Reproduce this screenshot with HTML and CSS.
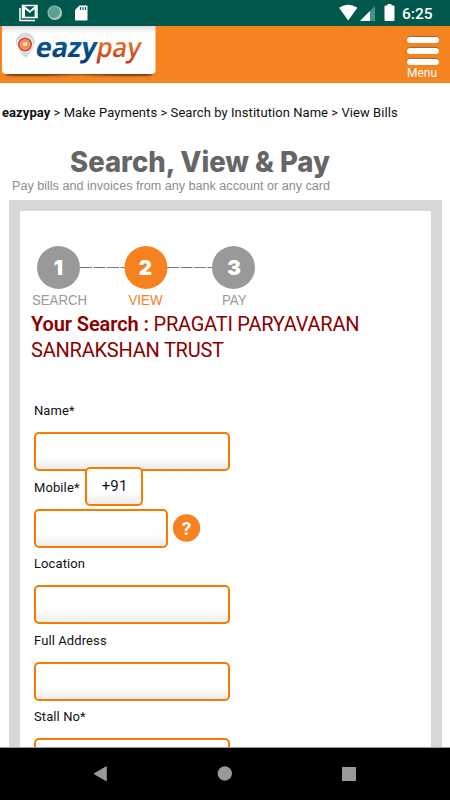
FILE: index.html
```html
<!DOCTYPE html>
<html lang="en">
<head>
  <meta charset="UTF-8" />
  <meta name="viewport" content="width=device-width, initial-scale=1.0" />
  <title>eazypay - View Bills</title>
  <link rel="stylesheet" href="styles.css">
</head>
<body>
  <div class="status-bar">
    <svg width="100" height="26" viewBox="0 0 100 26">
      <path d="M20 8v12.500h15" fill="none" stroke="#fff" stroke-width="1.500"/>
      <path d="M22.500 5.500h14.500v12h-14.500z" fill="none" stroke="#fff" stroke-width="1.500"/>
      <path d="M24 17V7l5.800 4.800L35.600 7V17" fill="none" stroke="#fff" stroke-width="2"/>
      <circle cx="55" cy="13" r="7" fill="#a9cac3"/>
      <circle cx="54" cy="12" r="6" fill="#5f9e93"/>
      <circle cx="54.500" cy="12.500" r="6.500" fill="none" stroke="#a9cac3" stroke-width="1.500" stroke-dasharray="1 1"/>
      <path d="M79.500 5.500h7q1 0 1 1v13q0 1-1 1h-10.500q-1 0-1-1v-9.500z" fill="#fff"/>
      <path d="M80.500 7v3M83 7v3M85.500 7v3" stroke="#00574b" stroke-width="1.200"/>
    </svg>
    <div class="status-right">
      <svg width="60" height="26" viewBox="0 0 60 26">
        <path d="M0 7.800Q9.200 1.800 18.400 7.800L9.200 20.500z" fill="#fff"/>
        <path d="M36 6v15H21z" fill="#4f8f83"/>
        <path d="M31 11v10H21z" fill="#fff"/>
        <path d="M48.500 4h4v1.500h2q1 0 1 1v13q0 1.500-1 1.500h-8q-1 0-1-1.500v-13q0-1 1-1h2z" fill="#fff"/>
      </svg>
      <span class="clock">6:25</span>
    </div>
  </div>

  <div class="header">
    <svg width="158" height="57" viewBox="0 26 158 57">
      <defs>
        <linearGradient id="cardFill" x1="0" y1="0" x2="0" y2="1">
          <stop offset="0" stop-color="#ddd"/>
          <stop offset="0.150" stop-color="#fff"/>
        </linearGradient>
        <linearGradient id="payFill" x1="0" y1="0" x2="0" y2="1">
          <stop offset="0.250" stop-color="#f5821f"/>
          <stop offset="0.900" stop-color="#c23a26"/>
        </linearGradient>
        <linearGradient id="eazyFill" x1="0" y1="0" x2="0" y2="1">
          <stop offset="0.200" stop-color="#0b6aa5"/>
          <stop offset="0.800" stop-color="#08407a"/>
        </linearGradient>
        <radialGradient id="pinFill">
          <stop offset="0" stop-color="#f9b27a"/>
          <stop offset="0.550" stop-color="#ee7a3c"/>
          <stop offset="1" stop-color="#c93324"/>
        </radialGradient>
        <filter id="soft"><feGaussianBlur stdDeviation="0.8"/></filter>
      </defs>
      <path d="M4 72h150l-3 3.500Q130 77 78 74.500Q28 77 7 75.500z" fill="#6b3a1a" filter="url(#soft)"/>
      <path d="M2 26h153.500v44q0 4-4 4H6q-4 0-4-4z" fill="url(#cardFill)"/>
      <path d="M16 44a9.500 9.500 0 1 1 18 2q-2 6-8 12q-8-6-10-14z" fill="#d9dadd"/>
      <circle cx="25" cy="44.500" r="7.800" fill="#fff"/>
      <circle cx="25" cy="44.500" r="7" fill="url(#pinFill)"/>
      <circle cx="25" cy="44.500" r="4.700" fill="none" stroke="#fbd9c3" stroke-width="0.800"/>
      <path d="M22.500 43h5M22.500 45h5M24 42v4M26.500 42v4" stroke="#fff" stroke-width="0.700"/>
      <g transform="translate(34.500 57) skewX(-10)">
        <text class="logo-text" x="0" y="0" textLength="61" lengthAdjust="spacingAndGlyphs" fill="url(#eazyFill)">eazy</text>
        <text class="logo-text pay" x="61" y="0" textLength="44" lengthAdjust="spacingAndGlyphs" fill="url(#payFill)">pay</text>
      </g>
    </svg>
    <div class="menu">
      <span class="bar"></span>
      <span class="bar"></span>
      <span class="bar"></span>
      <span class="menu-label">Menu</span>
    </div>
  </div>

  <div class="breadcrumb"><b>eazypay</b> &gt; Make Payments &gt; Search by Institution Name &gt; View Bills</div>

  <svg class="banner" width="450" height="60" viewBox="0 140 450 60">
    <text class="banner-title" x="70" y="171.500" textLength="260" lengthAdjust="spacingAndGlyphs">Search, View &amp; Pay</text>
    <text class="banner-sub" x="12" y="189.500" textLength="318" lengthAdjust="spacingAndGlyphs">Pay bills and invoices from any bank account or any card</text>
  </svg>

  <div class="panel">
    <svg class="steps" width="250" height="70" viewBox="20 240 250 70">
      <path d="M80 267.500H125M167 267.500H212" stroke="#777" stroke-width="1.200" stroke-dasharray="12 1.500"/>
      <circle cx="58.500" cy="267.500" r="21.500" fill="#999"/>
      <circle cx="146" cy="267.500" r="21.500" fill="#f5821f"/>
      <circle cx="233.500" cy="267.500" r="21.500" fill="#999"/>
      <text class="step-num" x="58.500" y="274.500">1</text>
      <text class="step-num" x="145.500" y="274.500">2</text>
      <text class="step-num" x="234" y="274.500">3</text>
      <text class="step-label" x="32" y="305" textLength="55" lengthAdjust="spacingAndGlyphs">SEARCH</text>
      <text class="step-label active" x="128.500" y="305" textLength="34" lengthAdjust="spacingAndGlyphs">VIEW</text>
      <text class="step-label" x="222" y="305" textLength="24.500" lengthAdjust="spacingAndGlyphs">PAY</text>
    </svg>

    <div class="search-name"><b>Your Search :</b> PRAGATI PARYAVARAN<br>SANRAKSHAN TRUST</div>

    <div class="form">
      <div class="field">
        <label for="name">Name*</label>
        <input type="text" id="name">
      </div>
      <div class="field">
        <label for="mobile">Mobile* <span class="code">+91</span></label>
        <div class="mobile-row">
          <input type="text" id="mobile" class="short">
          <svg width="28" height="28" viewBox="0 0 28 28">
            <circle cx="13.500" cy="14" r="13.700" fill="#f5821f"/>
            <text class="help-mark" x="13.500" y="21">?</text>
          </svg>
        </div>
      </div>
      <div class="field">
        <label for="location">Location</label>
        <input type="text" id="location">
      </div>
      <div class="field">
        <label for="address">Full Address</label>
        <input type="text" id="address">
      </div>
      <div class="field">
        <label for="stall">Stall No*</label>
        <input type="text" id="stall">
      </div>
    </div>
  </div>

  <div class="nav-bar">
    <svg width="450" height="52" viewBox="0 748 450 52" fill="#999">
      <path d="M106.800 767v13.500q0 1-1 .5L94.500 774.500q-1-.7 0-1.400L105.800 766.500q1-.5 1 .5z"/>
      <circle cx="224.800" cy="773.500" r="7.200"/>
      <path d="M342 767h14v14h-14z"/>
    </svg>
  </div>
</body>
</html>
```

FILE: styles.css
```css
* {
  box-sizing: border-box;
}
body {
  font-family: Roboto, Arial, sans-serif;
  background-color: #fff;
  color: #111;
  margin: 0;
  height: 800px;
  display: flex;
  flex-direction: column;
  overflow: hidden;
}
svg {
  display: block;
  flex: none;
}
.status-bar {
  height: 26px;
  flex: none;
  display: flex;
  justify-content: space-between;
  background-color: #00574b;
}
.status-right {
  display: flex;
  width: 111px;
}
.clock {
  color: #fff;
  font-size: 15.5px;
  font-weight: 500;
  line-height: 28px;
  margin-left: 3px;
}
.header {
  height: 57px;
  flex: none;
  display: flex;
  justify-content: space-between;
  background-color: #f58320;
}
.logo-text {
  font-family: "Open Sans", sans-serif;
  font-size: 27.5px;
  font-weight: 700;
}
.logo-text.pay {
  font-weight: 600;
}
.menu {
  display: flex;
  flex-direction: column;
  width: 43px;
  padding-top: 11px;
}
.bar {
  width: 32px;
  height: 6px;
  margin-bottom: 5px;
  border-radius: 3px;
  background-color: #fff;
  box-shadow: 0 -1px 1px rgba(90, 90, 90, 0.6);
}
.menu-label {
  color: #fff;
  font-size: 12px;
  line-height: 14px;
  margin-top: -4px;
}
.breadcrumb {
  height: 57px;
  flex: none;
  padding-left: 2px;
  font-size: 13px;
  line-height: 60px;
  letter-spacing: 0.06px;
  white-space: nowrap;
}
.banner-title {
  font-family: Inter, Arial, sans-serif;
  font-size: 28px;
  font-weight: 800;
  fill: #666;
}
.banner-sub {
  font-family: "Liberation Sans", Arial, sans-serif;
  font-size: 12.5px;
  fill: #8c8c8c;
}
.panel {
  width: 433px;
  height: 547px;
  flex: none;
  margin-left: 9px;
  border: 11px solid #d7d7d7;
  border-bottom: none;
  overflow: hidden;
}
.steps {
  margin-top: 29px;
}
.step-num {
  font-family: Inter, Arial, sans-serif;
  font-size: 20.5px;
  font-weight: 900;
  fill: #fff;
  text-anchor: middle;
}
.step-label {
  font-family: "Liberation Sans", Arial, sans-serif;
  font-size: 14px;
  fill: #999;
}
.step-label.active {
  fill: #f5821f;
}
.search-name {
  padding-left: 11px;
  margin-top: 1px;
  color: #8b0000;
  font-size: 20px;
  letter-spacing: -0.22px;
  line-height: 26px;
}
.search-name b {
  font-weight: 600;
  letter-spacing: -0.1px;
}
.form {
  padding: 31px 0 0 14px;
}
.field {
  height: 76.500px;
}
label {
  display: flex;
  align-items: center;
  height: 33px;
  margin-bottom: 5px;
  font-size: 13px;
  letter-spacing: 0.1px;
}
input, .code {
  display: block;
  width: 195.500px;
  height: 39px;
  border: 2px solid #f57c00;
  border-radius: 5px;
  background: linear-gradient(#fff 65%, #ececec);
}
.code {
  width: 58px;
  margin: -1px 0 0 5px;
  padding-left: 2px;
  font-size: 15px;
  line-height: 34px;
  text-align: center;
}
.mobile-row {
  display: flex;
  align-items: center;
  gap: 4.500px;
}
.short {
  width: 134px;
}
.help-mark {
  font-size: 19px;
  font-weight: 700;
  fill: #fff;
  text-anchor: middle;
}
.nav-bar {
  height: 53px;
  flex: none;
  border-top: 1px solid #999;
  background-color: #000;
}
```
